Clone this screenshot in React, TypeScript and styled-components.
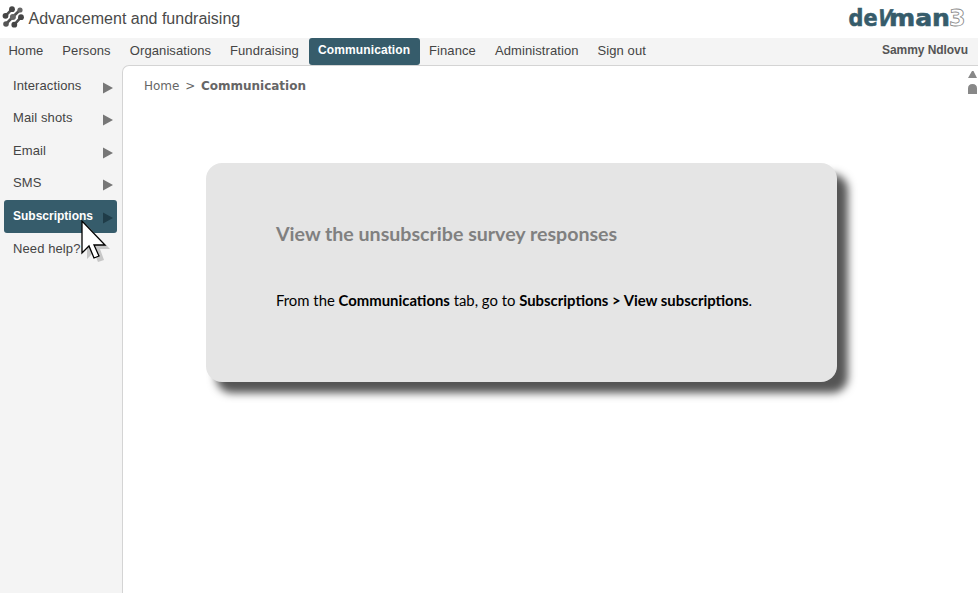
import React from 'react';
import styled, { createGlobalStyle } from 'styled-components';

const Global = createGlobalStyle`
  * { box-sizing: border-box; }
  body { margin: 0; background: #fff; font-family: "Liberation Sans", Arial, sans-serif; overflow: hidden; }
`;

const Page = styled.div`
  display: flex; flex-direction: column; width: 978px; height: 593px; background: #f4f4f4;
`;
const Header = styled.header`
  display: flex; align-items: center; justify-content: space-between; height: 38px; padding: 0 11px 0 2px; background: #fff;
`;
const Brand = styled.div`
  display: flex; align-items: center; height: 36px; color: #4a4a4a; font-size: 16px; line-height: 20px;
  svg { display: block; margin-right: 3.5px; margin-top: -3px; }
`;
const LogoSvg = styled.svg`display: block; overflow: visible;`;
const Nav = styled.nav`
  display: flex; height: 27px; flex: none; color: #444; font-size: 13px; letter-spacing: 0.09px;
`;
const NavItem = styled.a<{ $width: number; $active?: boolean }>`
  width: ${p => p.$width}px; padding-left: 9px; line-height: 25px; white-space: nowrap;
  &:first-child { padding-left: 8.4px; }
  ${p => p.$active && `background: #365c6b; color: #fff; font-weight: bold; font-size: 12px; border-radius: 3px; letter-spacing: .12px;`}
`;
const User = styled.div`
  margin-left: auto; padding-right: 10px; color: #555; font-weight: bold; font-size: 12px; line-height: 24px; letter-spacing: -0.06px;
`;
const Body = styled.div`display: flex; flex: 1; min-height: 0;`;
const Sidebar = styled.aside`width: 122px; flex: none; padding: 4.9px 5px 0 4px;`;
const SideItem = styled.div<{ $active?: boolean }>`
  display: flex; justify-content: space-between; height: ${p => (p.$active ? 33 : 32.5)}px; padding: 0 4px 0 9px;
  color: ${p => (p.$active ? '#fff' : '#444')}; font-size: ${p => (p.$active ? 12 : 13)}px;
  font-weight: ${p => (p.$active ? 'bold' : 'normal')}; line-height: ${p => (p.$active ? 32 : 31)}px;
  letter-spacing: ${p => (p.$active ? 0 : 0.1)}px;
  background: ${p => (p.$active ? '#365c6b' : 'transparent')}; border-radius: 3px;
  svg { display: block; margin-top: 12px; fill: ${p => (p.$active ? '#1f3c48' : '#777')}; }
`;
const Main = styled.main`
  position: relative; flex: 1; background: #fff; border: 1px solid #d4d4d4; border-width: 1px 0 0 1px; border-top-left-radius: 7px;
`;
const Crumbs = styled.div`
  display: flex; gap: 5.7px; padding: 12px 0 0 21px; color: #666; font: 12px/16px "DejaVu Sans", Verdana, sans-serif; height: 96.6px;
`;
const Card = styled.section`
  width: 631.4px; height: 219px; margin-left: 82.5px; padding: 57.4px 0 0 70.5px; border-radius: 16px; background: #e5e5e5;
  box-shadow: 10.5px 11px 8px #555; font-family: Lato, Carlito, sans-serif;
`;
const Title = styled.h1`margin: 0; color: #808080; font-size: 19.6px; line-height: 28px; font-weight: bold; white-space: nowrap;`;
const Copy = styled.p`margin: 40.4px 0 0; color: #000; font-size: 14.86px; line-height: 24px; white-space: nowrap;`;
const ScrollMarks = styled.svg`position: absolute; right: 0; top: 4px;`;
const Cursor = styled.svg`position: absolute; left: 79px; top: 218px;`;

const Mark = () => (
  <svg width="23" height="23" viewBox="0 0 23 23" stroke="#505050" strokeWidth="2.6" fill="#454545">
    <path d="M3.5 9.8L10 3.2M4 18L10.7 11L18 4M12.3 18.7L19 11.2" />
    <g stroke="none">
      <circle cx="10" cy="3.2" r="2.9" /><circle cx="18" cy="4" r="2.6" fill="#666" />
      <circle cx="3.5" cy="9.8" r="2.9" /><circle cx="10.9" cy="11" r="3" fill="#666" /><circle cx="19" cy="11.2" r="2.9" />
      <circle cx="4" cy="18" r="2.8" fill="#555" /><circle cx="12.3" cy="18.7" r="2.9" />
    </g>
  </svg>
);

const Logo = () => (
  <LogoSvg width="118" height="38" viewBox="0 0 118 38" fontFamily="DejaVu Sans, Verdana, sans-serif" fontWeight="bold" fontSize="22.5" fill="#365c6b">
    <g stroke="#365c6b" strokeWidth="0.6">
      <text x="-0.5" y="26" textLength="29" lengthAdjust="spacingAndGlyphs">de</text>
      <text transform="translate(27.2 26) skewX(-13)" textLength="13.5" lengthAdjust="spacingAndGlyphs">V</text>
      <text x="40" y="26" textLength="61" lengthAdjust="spacingAndGlyphs">man</text>
    </g>
    <text x="100" y="26" fill="#fff" stroke="#888" strokeWidth="0.8" textLength="16.5" lengthAdjust="spacingAndGlyphs">3</text>
  </LogoSvg>
);

const nav: [string, number, boolean?][] = [
  ['Home', 53.3], ['Persons', 67.5], ['Organisations', 100.2], ['Fundraising', 88], ['Communication', 111, true],
  ['Finance', 66], ['Administration', 102.5], ['Sign out', 80],
];
const side = ['Interactions', 'Mail shots', 'Email', 'SMS', 'Subscriptions', 'Need help?'];

export default function App() {
  return (
    <>
      <Global />
      <Page>
        <Header><Brand><Mark />Advancement and fundraising</Brand><Logo /></Header>
        <Nav>
          {nav.map(([t, w, a]) => <NavItem key={t} $width={w} $active={a}>{t}</NavItem>)}
          <User>Sammy Ndlovu</User>
        </Nav>
        <Body>
          <Sidebar>
            {side.map((t, i) => (
              <SideItem key={t} $active={i === 4}>{t}{i < 5 && <svg width="10" height="12"><path d="M0 0.5L10 6L0 11.5Z" /></svg>}</SideItem>
            ))}
          </Sidebar>
          <Main>
            <Crumbs><span>Home</span><span>&gt;</span><b>Communication</b></Crumbs>
            <Card>
              <Title>View the unsubscribe survey responses</Title>
              <Copy>From the <b>Communications</b> tab, go to <b>Subscriptions &gt; View subscriptions</b>.</Copy>
            </Card>
            <ScrollMarks width="11" height="25" fill="#888"><path d="M1 8L5 1H6.5L10 8ZM1 24V18.5Q1 14 5.5 14T10 18.5V24Z" /></ScrollMarks>
          </Main>
        </Body>
      </Page>
      <Cursor width="34" height="48" viewBox="0 0 34 48">
        <path d="M8 7V41L15 34L19 44L25 42L21 31H31Z" fill="#999" opacity=".5" />
        <path d="M3 3V35L10 28L15 40L20 38L15 27H26Z" fill="#fff" stroke="#000" strokeWidth="1.3" />
      </Cursor>
    </>
  );
}
